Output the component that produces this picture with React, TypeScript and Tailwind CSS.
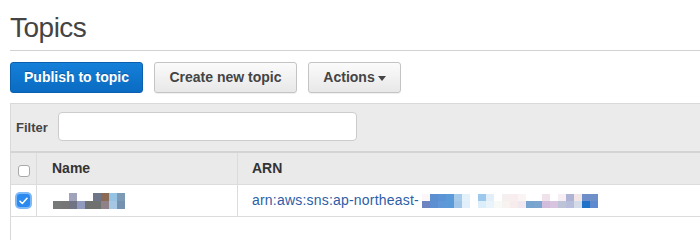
// pixelated (redacted) topic name, 2 rows of 8px cells
const nameBlur = [
  ['#ffffff', '#ffffff', '#a0a3bb', '#ffffff', '#ffffff', '#6e7589', '#8b6a55', '#95c3e3', '#7c9ab5'],
  ['#777878', '#767676', '#707383', '#8f9abe', '#6f7070', '#6f7070', '#8f8188', '#a5c7e3', '#7591b0'],
];

// pixelated tail of the ARN
const arnBlur = [
  [
    '#fbf6f8', '#5b8fd0', '#5b93d6', '#5b9ad8', '#a8cbea', '#e3f1fb', '#ffffff', '#9cc8ee',
    '#e2eef8', '#ffffff', '#f5f0ef', '#f8eef0', '#faf4f4', '#ffffff', '#ffffff', '#f0e2ea',
    '#ffffff', '#f6eef2', '#aeb2d4', '#f1e5e5', '#6d8ec9', '#6e8fc8',
  ],
  [
    '#6d84c0', '#5b8fd2', '#5f97d9', '#5b9ad8', '#a1c6e8', '#e0eff9', '#ffffff', '#dbeefa',
    '#e8f3fa', '#f6f9f6', '#f7f3f0', '#f7ecec', '#f1e7ee', '#76a4cf', '#7aa5cf', '#d1bcdc',
    '#d9c4df', '#bec4d8', '#b8bdd9', '#d3dbe8', '#1e73c9', '#5f8ad0',
  ],
];

function Pixels({ rows, cell, cellH }: { rows: string[][]; cell: number; cellH: number }) {
  const cols = rows[0].length;
  return (
    <svg width={cols * cell} height={rows.length * cellH} className="block shrink-0">
      {rows.map((row, y) =>
        row.map((c, x) => (
          <rect key={`${x}-${y}`} x={x * cell} y={y * cellH} width={cell} height={cellH} fill={c} />
        )),
      )}
    </svg>
  );
}

const grayBtn =
  'flex h-[31px] items-center justify-center rounded-[3px] border border-[#c4c4c4] bg-gradient-to-b from-[#fbfbfb] to-[#e8e8e8] text-[14px] font-bold text-[#444] shadow-[0_1px_0_rgba(0,0,0,0.06)]';

export default function App() {
  return (
    <div className="h-[240px] w-[700px] overflow-hidden bg-white pl-[10px] font-['Liberation_Sans',Arial,sans-serif]">
      {/* Page title */}
      <h1 className="pt-[14px] text-[28px] leading-[28px] tracking-[-0.5px] text-[#444]">Topics</h1>
      <div className="mt-[8px] h-px bg-[#d2d2d2]" />

      {/* Toolbar */}
      <div className="mt-[11px] flex gap-[11px]">
        <button className="flex h-[31px] w-[133px] items-center justify-center rounded-[3px] border border-[#0a5fae] bg-gradient-to-b from-[#1580d8] to-[#0a6bc2] text-[14px] font-bold text-white [text-shadow:0_-1px_0_rgba(0,0,0,0.25)]">
          Publish to topic
        </button>
        <button className={`${grayBtn} w-[143px]`}>Create new topic</button>
        <button className={`${grayBtn} w-[93px] gap-[3px]`}>
          Actions
          <svg width="8" height="5" viewBox="0 0 8 5" className="mt-[1px]">
            <path d="M0 0h8L4 5z" fill="#444" />
          </svg>
        </button>
      </div>

      {/* Filter + table panel */}
      <div className="mt-[10px] border-l border-t border-[#d9d9d9] bg-[#ebebeb]">
        <div className="flex h-[47px] items-start gap-[10px] pl-[5px] pt-[8px]">
          <span className="mt-[6px] text-[13px] font-bold text-[#444]">Filter</span>
          <input className="h-[29px] w-[299px] rounded-[4px] border border-[#cccccc] bg-white px-2 text-[13px] outline-none" />
        </div>

        <div className="border-t-2 border-[#d4d4d4]">
          {/* Header */}
          <div className="flex h-[32px] border-b border-[#dcdcdc] bg-[#eaeaea] text-[14px] font-bold text-[#333]">
            <div className="flex w-[26px] items-center justify-center border-r border-[#dcdcdc]">
              <span className="mt-[5px] block h-[12px] w-[12px] rounded-[3px] border border-[#a9a9a9] bg-white" />
            </div>
            <div className="flex w-[201px] items-center border-r border-[#dcdcdc] pl-[15px]">Name</div>
            <div className="flex flex-1 items-center pl-[14px]">ARN</div>
          </div>

          {/* Row */}
          <div className="flex h-[32px] border-b border-[#dcdcdc] bg-white text-[14px]">
            <div className="flex w-[26px] items-center justify-center border-r border-[#dcdcdc]">
              <span className="flex h-[13px] w-[13px] items-center justify-center rounded-[3px] bg-[#2a8af0] ring-2 ring-[#7db8f7]">
                <svg width="9" height="8" viewBox="0 0 9 8">
                  <path d="M1 4.2l2.3 2.3L8 1.3" fill="none" stroke="white" strokeWidth="1.6" strokeLinecap="round" strokeLinejoin="round" />
                </svg>
              </span>
            </div>
            <div className="flex w-[201px] items-center border-r border-[#dcdcdc] pl-[16px]">
              <Pixels rows={nameBlur} cell={8} cellH={8} />
            </div>
            <div className="flex flex-1 items-center pl-[14px] text-[#2c5ea8]">
              <span className="tracking-[0.2px]">arn:aws:sns:ap-northeast-</span>
              <span className="ml-[3px] mt-[1px]">
                <Pixels rows={arnBlur} cell={8} cellH={7} />
              </span>
            </div>
          </div>

          <div className="h-[40px] bg-white" />
        </div>
      </div>
    </div>
  );
}
